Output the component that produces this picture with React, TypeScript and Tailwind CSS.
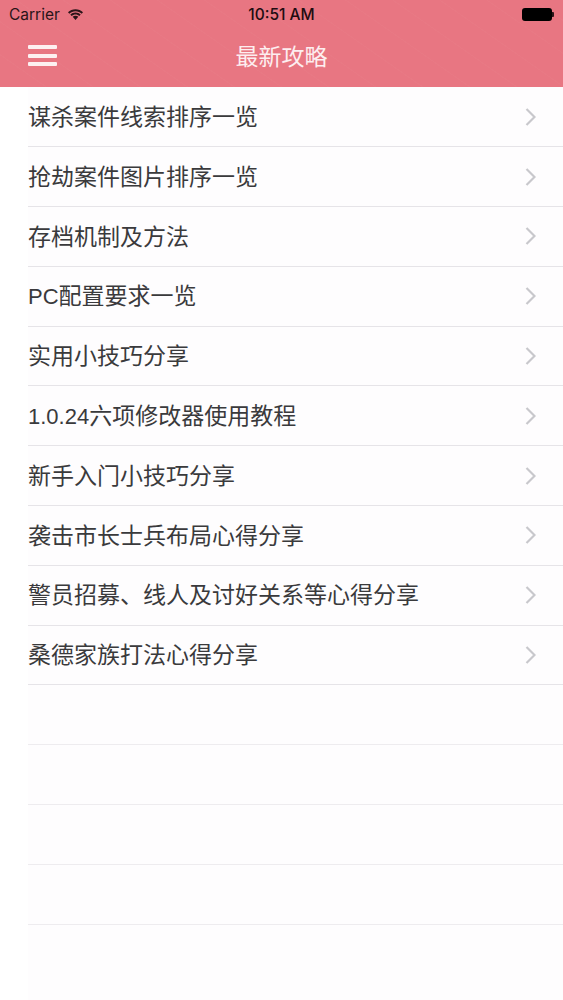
const items = [
  { latin: "", text: "谋杀案件线索排序一览" },
  { latin: "", text: "抢劫案件图片排序一览" },
  { latin: "", text: "存档机制及方法" },
  { latin: "PC", text: "配置要求一览" },
  { latin: "", text: "实用小技巧分享" },
  { latin: "1.0.24", text: "六项修改器使用教程" },
  { latin: "", text: "新手入门小技巧分享" },
  { latin: "", text: "袭击市长士兵布局心得分享" },
  { latin: "", text: "警员招募、线人及讨好关系等心得分享" },
  { latin: "", text: "桑德家族打法心得分享" },
];

function Wifi() {
  return (
    <svg width="17" height="12" viewBox="0 0 17 12" fill="#2a1418">
      <path d="M8.5 2.2c2.4 0 4.600.9 6.200 2.500l1.300-1.400C14 1.300 11.400.2 8.500.2S3 1.300 1 3.300l1.300 1.400C3.900 3.100 6.100 2.200 8.500 2.200z" />
      <path d="M8.500 5.400c1.500 0 2.900.6 3.900 1.600l1.300-1.400C12.400 4.200 10.500 3.400 8.500 3.400s-3.900.8-5.200 2.200L4.600 7c1-1 2.400-1.600 3.900-1.600z" />
      <path d="M8.500 6.700c-1.100 0-2.100.4-2.800 1.100l2.800 3.200 2.800-3.200c-.7-.7-1.700-1.100-2.800-1.100z" />
    </svg>
  );
}

function Chevron() {
  return (
    <svg width="11" height="18" viewBox="0 0 11 18" fill="none" stroke="#c8c8cc" strokeWidth="2.200">
      <path d="M1.500 1 L9.500 9 L1.500 17" />
    </svg>
  );
}

export default function App() {
  return (
    <div className="h-[1000px] w-[563px] overflow-hidden bg-white font-['Liberation_Sans','Noto_Sans_CJK_SC',sans-serif]">
      <header className="h-[87px] bg-[#e87682] bg-[repeating-linear-gradient(35deg,transparent_0_26px,rgba(255,255,255,0.02)_26px_27px)] flex flex-col">
        <div className="h-[29px] flex items-center justify-between pl-[9px] pr-[9px] text-[#2a1418] text-[15.500px] font-['Inter',sans-serif] relative">
          <div className="flex items-center gap-[7px]">
            <span>Carrier</span>
            <Wifi />
          </div>
          <span className="absolute left-0 right-0 text-center font-medium text-[#200c10]">10:51 AM</span>
          <div className="flex items-center">
            <div className="w-[30px] h-[13px] bg-black rounded-[3px]" />
            <div className="w-[2px] h-[5px] bg-[#2a1418] rounded-r-[1px]" />
          </div>
        </div>
        <div className="flex-1 relative flex items-center justify-center pb-[2px]">
          <div className="absolute left-[28px] top-[16px] flex flex-col gap-[4.500px]">
            <div className="w-[29px] h-[4px] rounded-[1px] bg-[#fdf0f1]" />
            <div className="w-[29px] h-[4px] rounded-[1px] bg-[#fdf0f1]" />
            <div className="w-[29px] h-[4px] rounded-[1px] bg-[#fdf0f1]" />
          </div>
          <h1 className="text-[23px] text-[#fdeef0]">最新攻略</h1>
        </div>
      </header>
      <ul className="pt-[0.400px]">
        {items.map((t) => (
          <li key={t.text} className="h-[59.800px] pl-[28px]">
            <div className="h-full flex items-center justify-between pr-[27px] bg-[#fefdfe] border-b border-[#e6e4e8] text-[23px] text-[#3a3a3c]">
              <span className="pt-[1px]">
                {t.latin && <span className="text-[22px]">{t.latin}</span>}
                {t.text}
              </span>
              <Chevron />
            </div>
          </li>
        ))}
        {[0, 1, 2, 3].map((i) => (
          <li key={i} className="h-[59.800px] pl-[28px]">
            <div className="h-full bg-[#fefdfe] border-b border-[#eeecef]" />
          </li>
        ))}
        <li className="h-[80px] ml-[28px] bg-[#fefdfe]" />
      </ul>
    </div>
  );
}
